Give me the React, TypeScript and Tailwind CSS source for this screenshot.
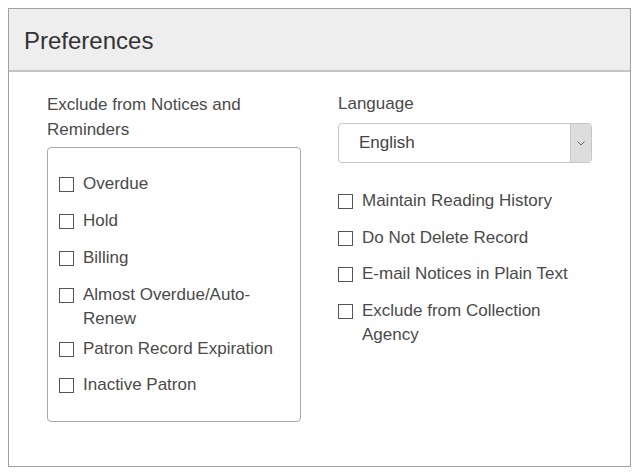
import React from "react";

const font = { fontFamily: '"Liberation Sans", Arial, sans-serif' };

function Check(props: { label: React.ReactNode; className?: string }) {
  return (
    <label className={`flex items-start gap-[9px] leading-[24px] ${props.className ?? ""}`}>
      <span className="mt-[5px] h-[15px] w-[15px] shrink-0 border border-[#555] bg-white" />
      <span>{props.label}</span>
    </label>
  );
}

export default function App() {
  return (
    <div className="bg-white p-2" style={font}>
      <div className="flex h-[459px] w-[623px] flex-col border border-[#a0a0a0]">
        <div className="flex h-[63px] items-center border-b-2 border-[#c4c4c4] bg-[#eeeeee] px-[15px] pt-[2px]">
          <h2 className="text-[24px] leading-none text-[#333]">Preferences</h2>
        </div>

        <div className="grid grid-cols-2 gap-x-[37px] px-[38px] pt-[20px] text-[17px] text-[#4a4a4a]">
          <div>
            <p className="leading-[25px]">Exclude from Notices and Reminders</p>
            <div className="mt-[5px] rounded-[4px] border border-[#a8a8a8] px-[11px] pb-[24px] pt-[24px]">
              <Check label="Overdue" />
              <Check label="Hold" className="mt-[13px]" />
              <Check label="Billing" className="mt-[13px]" />
              <Check label={<>Almost Overdue/Auto-<br />Renew</>} className="mt-[13px]" />
              <Check label="Patron Record Expiration" className="mt-[6px]" />
              <Check label="Inactive Patron" className="mt-[12px]" />
            </div>
          </div>

          <div>
            <p className="leading-[24px]">Language</p>
            <div className="mt-[7px] flex h-[40px] items-stretch overflow-hidden rounded-[4px] border border-[#c6c6c6]">
              <div className="flex flex-1 items-center pl-[20px] text-[#444]">English</div>
              <div className="flex w-[21px] items-center justify-center border-l border-[#c6c6c6] bg-[#dddddd]">
                <svg width="8" height="5" viewBox="0 0 8 5" fill="none">
                  <path d="M0.5 0.5L4 4L7.5 0.5" stroke="#666" strokeWidth="1" />
                </svg>
              </div>
            </div>
            <div className="mt-[26px]">
              <Check label="Maintain Reading History" />
              <Check label="Do Not Delete Record" className="mt-[13px]" />
              <Check label="E-mail Notices in Plain Text" className="mt-[12px]" />
              <Check label={<>Exclude from Collection<br />Agency</>} className="mt-[13px]" />
            </div>
          </div>
        </div>
      </div>
    </div>
  );
}
